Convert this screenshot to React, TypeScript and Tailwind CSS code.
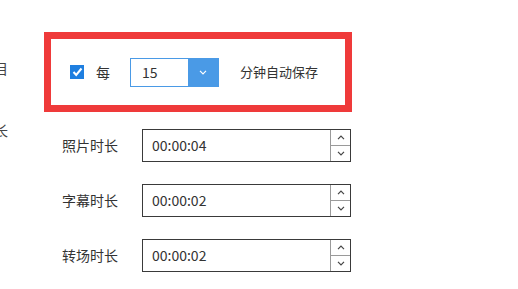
const font = { fontFamily: '"Noto Sans CJK SC", "Noto Sans", sans-serif' };

function Spin({ value }: { value: string }) {
  return (
    <div className="flex h-[33px] w-[209px] border border-[#3a3a3a] bg-white">
      <div className="flex flex-1 items-center pl-[9px] text-[14px] text-[#333]">{value}</div>
      <div className="flex w-[20px] flex-col border-l border-[#9a9a9a]">
        <div className="flex flex-1 items-center justify-center border-b border-[#9a9a9a]">
          <svg width="8" height="5" viewBox="0 0 8 5" fill="none">
            <path d="M1 4.2L4 1.2L7 4.2" stroke="#444" strokeWidth="1.2" />
          </svg>
        </div>
        <div className="flex flex-1 items-center justify-center">
          <svg width="8" height="5" viewBox="0 0 8 5" fill="none">
            <path d="M1 0.8L4 3.8L7 0.8" stroke="#444" strokeWidth="1.2" />
          </svg>
        </div>
      </div>
    </div>
  );
}

function Row({ label, value }: { label: string; value: string }) {
  return (
    <div className="flex h-[33px] items-center">
      <div className="w-[98px] pl-[18px] text-[14px] text-[#333]">{label}</div>
      <Spin value={value} />
    </div>
  );
}

export default function App() {
  return (
    <div className="relative flex h-[289px] w-[518px] overflow-hidden bg-white" style={font}>
      <div className="ml-[-6px] flex w-[50px] shrink-0 flex-col text-[14px] text-[#444]">
        <div className="mt-[60px] leading-[16px]">目</div>
        <div className="mt-[46px] leading-[16px]">长</div>
      </div>
      <div className="flex flex-col">
        <div className="mt-[32px] flex h-[80px] w-[308px] items-center border-[7px] border-[#ef3a3a] pl-[19px]">
          <div className="flex h-[14px] w-[14px] items-center justify-center bg-[#1f7fe0]">
            <svg width="11" height="10" viewBox="0 0 11 10" fill="none">
              <path d="M1.5 5L4.2 8L9.5 1.5" stroke="white" strokeWidth="2" />
            </svg>
          </div>
          <span className="ml-[12px] text-[14px] text-[#333]">每</span>
          <div className="ml-[20px] flex h-[29px] w-[89px] border border-[#4a9ae6]">
            <div className="flex flex-1 items-center pl-[11px] text-[14px] text-[#333]">15</div>
            <div className="flex w-[30px] items-center justify-center bg-[#4a9ae6]">
              <svg width="8" height="5" viewBox="0 0 8 5" fill="none">
                <path d="M1 0.8L4 3.8L7 0.8" stroke="white" strokeWidth="1.2" />
              </svg>
            </div>
          </div>
          <span className="ml-[21px] text-[13px] text-[#333]">分钟自动保存</span>
        </div>
        <div className="mt-[17px] flex flex-col gap-[22px]">
          <Row label="照片时长" value="00:00:04" />
          <Row label="字幕时长" value="00:00:02" />
          <Row label="转场时长" value="00:00:02" />
        </div>
      </div>
    </div>
  );
}
